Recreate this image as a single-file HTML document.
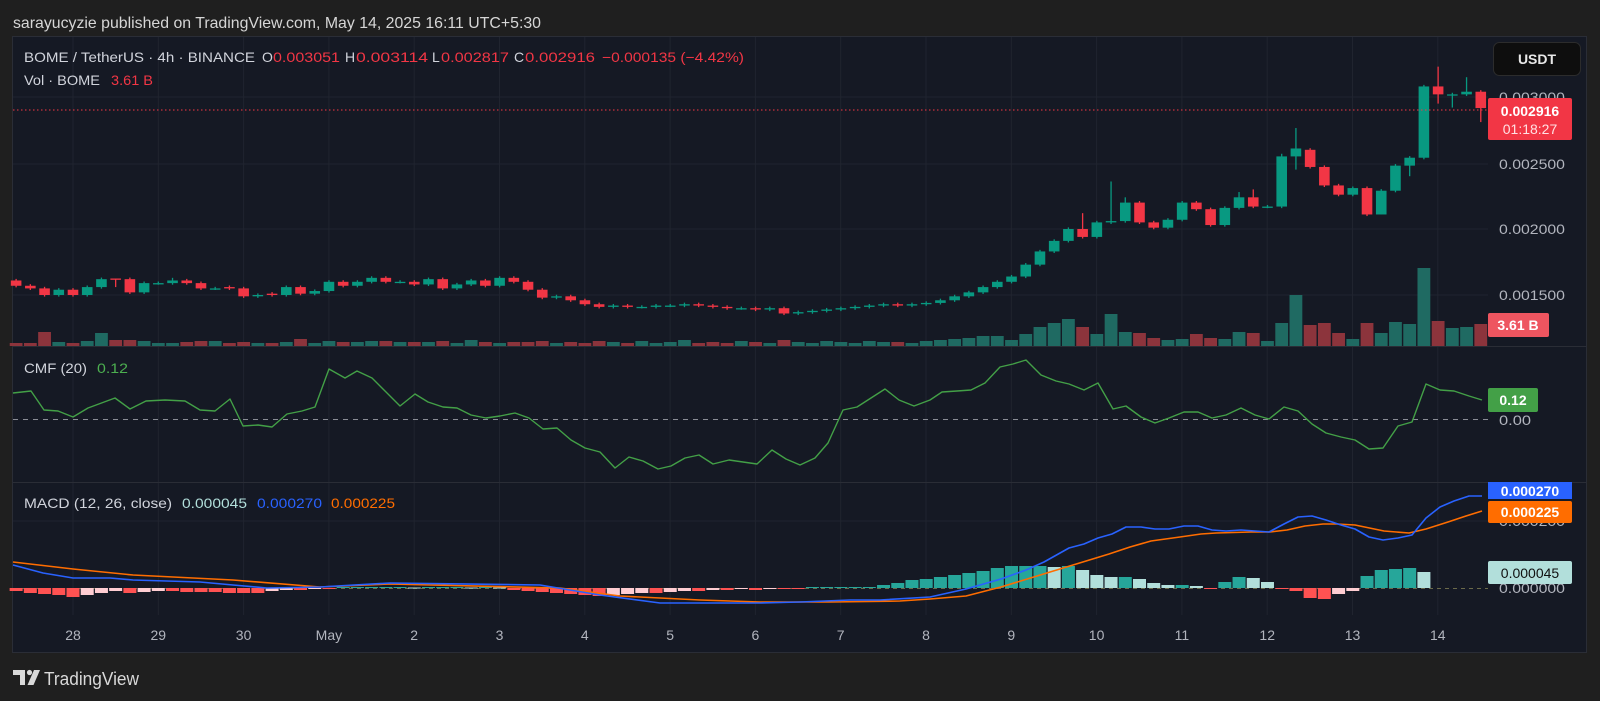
<!DOCTYPE html>
<html><head><meta charset="utf-8"><style>
html,body{margin:0;padding:0;background:#1f1f1f;width:1600px;height:701px;overflow:hidden}
svg{display:block}
text{font-family:"Liberation Sans",sans-serif}
</style></head><body>
<svg id="s" width="1600" height="701" viewBox="0 0 1600 701" xmlns="http://www.w3.org/2000/svg">
<rect x="0" y="0" width="1600" height="701" fill="#1f1f1f"/>
<rect x="12.5" y="36.5" width="1574" height="616" fill="#151924" stroke="#2a2d36"/>
<g id="grid"></g>
<g id="plot"></g>
<text x="13" y="28" font-size="16" fill="#d6d6d6" textLength="528" lengthAdjust="spacingAndGlyphs">sarayucyzie published on TradingView.com, May 14, 2025 16:11 UTC+5:30</text>
<g font-size="14">
<text x="24" y="62" fill="#d1d4dc" textLength="231" lengthAdjust="spacingAndGlyphs">BOME / TetherUS · 4h · BINANCE</text>
<text x="262" y="62" fill="#d1d4dc">O</text><text x="273" y="62" fill="#f23645" textLength="67" lengthAdjust="spacingAndGlyphs">0.003051</text>
<text x="345" y="62" fill="#d1d4dc">H</text><text x="356" y="62" fill="#f23645" textLength="72" lengthAdjust="spacingAndGlyphs">0.003114</text>
<text x="432" y="62" fill="#d1d4dc">L</text><text x="441" y="62" fill="#f23645" textLength="68" lengthAdjust="spacingAndGlyphs">0.002817</text>
<text x="514" y="62" fill="#d1d4dc">C</text><text x="525" y="62" fill="#f23645" textLength="70" lengthAdjust="spacingAndGlyphs">0.002916</text>
<text x="602" y="62" fill="#f23645" textLength="142" lengthAdjust="spacingAndGlyphs">−0.000135 (−4.42%)</text>
<text x="24" y="85" fill="#d1d4dc" textLength="76" lengthAdjust="spacingAndGlyphs">Vol · BOME</text>
<text x="111" y="85" fill="#f23645" textLength="42" lengthAdjust="spacingAndGlyphs">3.61 B</text>
<text x="24" y="373" fill="#d1d4dc" textLength="63" lengthAdjust="spacingAndGlyphs">CMF (20)</text>
<text x="97" y="373" fill="#4caf50" textLength="31" lengthAdjust="spacingAndGlyphs">0.12</text>
<text x="24" y="508" fill="#d1d4dc" textLength="148" lengthAdjust="spacingAndGlyphs">MACD (12, 26, close)</text>
<text x="182" y="508" fill="#b2dfdb" textLength="65" lengthAdjust="spacingAndGlyphs">0.000045</text>
<text x="257" y="508" fill="#2962ff" textLength="65" lengthAdjust="spacingAndGlyphs">0.000270</text>
<text x="331" y="508" fill="#ff6d00" textLength="64" lengthAdjust="spacingAndGlyphs">0.000225</text>
</g>
<g font-size="14" fill="#b2b5be">
<text x="1499" y="102" textLength="66" lengthAdjust="spacingAndGlyphs">0.003000</text>
<text x="1499" y="169" textLength="66" lengthAdjust="spacingAndGlyphs">0.002500</text>
<text x="1499" y="234" textLength="66" lengthAdjust="spacingAndGlyphs">0.002000</text>
<text x="1499" y="300" textLength="66" lengthAdjust="spacingAndGlyphs">0.001500</text>
<text x="1499" y="425" textLength="32" lengthAdjust="spacingAndGlyphs">0.00</text>
<text x="1499" y="526" textLength="66" lengthAdjust="spacingAndGlyphs">0.000200</text>
<text x="1499" y="593" textLength="66" lengthAdjust="spacingAndGlyphs">0.000000</text>
</g>
<g id="tl" font-size="14" fill="#b2b5be" text-anchor="middle"></g>
<rect x="1493.5" y="42.5" width="87" height="33" rx="6" fill="#0e0e0e" stroke="#2c2c2c"/>
<text x="1537" y="64" font-size="14" font-weight="bold" fill="#e8e8e8" text-anchor="middle">USDT</text>
<rect x="1488" y="98" width="84" height="42" rx="2" fill="#f23645"/>
<text x="1530" y="116" font-size="14" font-weight="bold" fill="#fff" text-anchor="middle">0.002916</text>
<text x="1530" y="134" font-size="14" fill="#ffe0e3" text-anchor="middle">01:18:27</text>
<rect x="1488" y="313" width="61" height="24" rx="2" fill="#ee5560"/>
<text x="1518" y="330" font-size="14" font-weight="bold" fill="#fff" text-anchor="middle">3.61 B</text>
<rect x="1488" y="388" width="50" height="24" rx="2" fill="#43a047"/>
<text x="1513" y="405" font-size="14" font-weight="bold" fill="#fff" text-anchor="middle">0.12</text>
<rect x="1488" y="482" width="84" height="17" fill="#2962ff"/>
<text x="1530" y="496" font-size="14" font-weight="bold" fill="#fff" text-anchor="middle">0.000270</text>
<rect x="1488" y="501" width="84" height="22" rx="2" fill="#ff6d00"/>
<text x="1530" y="517" font-size="14" font-weight="bold" fill="#fff" text-anchor="middle">0.000225</text>
<rect x="1488" y="561" width="84" height="23" rx="2" fill="#b2dfdb"/>
<text x="1530" y="578" font-size="14" fill="#111" text-anchor="middle">0.000045</text>
<g fill="#d9d9d9">
<path d="M13 670h12v15h-5v-10h-7z"/>
<circle cx="29.5" cy="672.5" r="2.6"/>
<path d="M34 670h6l-6.5 15h-6z"/>
<text x="44" y="685" font-size="18" textLength="95" lengthAdjust="spacingAndGlyphs">TradingView</text>
</g>
</svg>
<script>
(function(){
function X(k){return 73+k*14.22;}
function Y(p){return 97+(3-p)*132;}
var grid='';
var days=['28','29','30','May','2','3','4','5','6','7','8','9','10','11','12','13','14'];
var tl='';
for(var i=0;i<days.length;i++){var x=73+i*85.3;grid+='<line x1="'+x+'" y1="37" x2="'+x+'" y2="615" stroke="#20242f"/>';tl+='<text x="'+x+'" y="640">'+days[i]+'</text>';}
[97,164,229,295,521].forEach(function(y){grid+='<line x1="13" y1="'+y+'" x2="1488" y2="'+y+'" stroke="#20242f"/>';});
grid+='<line x1="13" y1="346.5" x2="1587" y2="346.5" stroke="#2a2d36"/>';
grid+='<line x1="13" y1="482.5" x2="1587" y2="482.5" stroke="#2a2d36"/>';
document.getElementById('grid').innerHTML=grid;
document.getElementById('tl').innerHTML=tl;
var C=[1.57,1.55,1.50,1.54,1.50,1.56,1.62,1.62,1.52,1.59,1.59,1.61,1.59,1.55,1.55,1.55,1.49,1.50,1.50,1.56,1.51,1.53,1.60,1.57,1.60,1.63,1.60,1.60,1.58,1.62,1.55,1.58,1.61,1.57,1.63,1.60,1.54,1.48,1.49,1.46,1.43,1.41,
1.42,1.41,1.41,1.42,1.42,1.43,1.42,1.41,1.40,1.40,1.39,1.40,1.36,1.37,1.38,1.39,1.40,1.41,1.42,1.43,1.42,1.43,1.44,1.46,1.49,1.52,1.56,1.60,
1.64,1.73,1.83,1.91,2.00,1.94,2.05,2.06,2.20,2.05,2.01,2.07,2.20,2.15,2.03,2.16,2.24,2.17,2.17,2.55,2.61,2.47,2.33,2.26,2.31,2.11,2.29,2.48,2.54,3.08,3.02,3.02,3.04,2.916];
var V=[3,3,14,4,3,5,13,6,6,5,3,3,4,5,5,3,4,3,3,4,7,3,5,4,4,5,5,4,4,4,5,3,6,4,3,4,4,5,3,4,3,5,
4,3,5,3,4,6,3,4,3,5,4,3,6,4,3,5,4,3,5,4,4,3,5,6,7,8,10,10,
6,12,19,23,27,19,12,32,14,13,8,6,7,12,8,7,14,13,5,23,51,21,23,13,7,23,13,24,22,78,25,18,19,22];
var hiO={73:2.36,86:2.765,96:3.23,98:3.15,83:2.30,3:1.62,7:1.63,85:2.57,71:2.12,74:2.24,82:2.28};
var loO={99:2.81,3:1.56,96:2.95,97:2.92,86:2.45,94:2.40,92:2.11};
var s='';
var prev=1.61;
for(var i=0;i<C.length;i++){
 var k=i-4,x=X(k),c=C[i],o=prev;if(k==3)o=1.625;if(k==11)o=1.56;if(k==14)o=1.51;if(k==87)o=2.60;
 var up=c>=o,col=up?'#089981':'#f23645';
 var hi=hiO[k]||Math.max(o,c)+0.012,lo=loO[k]||Math.min(o,c)-0.012;
 var vh=V[i]||3;
 s+='<rect x="'+(x-6.4)+'" y="'+(346-vh)+'" width="12.8" height="'+vh+'" fill="'+(up?'#1f6a62':'#8c343c')+'"/>';
 s+='<line x1="'+x+'" y1="'+Y(hi)+'" x2="'+x+'" y2="'+Y(lo)+'" stroke="'+col+'" stroke-width="1.3"/>';
 var t=Y(Math.max(o,c)),b=Y(Math.min(o,c));if(b-t<1.3){b=t+1.3;}
 s+='<rect x="'+(x-5.3)+'" y="'+t+'" width="10.6" height="'+(b-t)+'" fill="'+col+'"/>';
 prev=c;
}
s+='<line x1="13" y1="110" x2="1488" y2="110" stroke="#f23645" stroke-width="1" stroke-dasharray="1.5,2.5"/>';
s+='<line x1="13" y1="419.5" x2="1488" y2="419.5" stroke="#8a8d96" stroke-dasharray="5,5"/>';
s+='<line x1="13" y1="588.5" x2="1488" y2="588.5" stroke="#6b6a4a" stroke-dasharray="4,4"/>';
var H=[-3,-5,-6,-7,-9,-7,-5,-3,-5,-4,-3,-3,-4,-4,-4,-5,-5,-5,-3,-2,-2,-1,-1,1,1,1,1,1,0.5,1,1,1,0.5,1,0.5,-2,-3,-4,-5,-6,-7,-8,
-7,-6,-5,-5,-4,-3,-3,-2,-2,-1,-2,-1,-1,-1,1,1,1,1,1,3,5,8,9,11,
13,15,17,20,22,22,22,21,22,18,13,11,11,9,5,3,3,2,-1,6,11,10,6,-1,-3,-10,-11,-6,-3,12,18,19,20,16];
var pv=0;
for(var i=0;i<H.length;i++){var k=i-4,x=X(k),h=H[i],col;
 if(h>=0)col=(h>=pv)?'#26a69a':'#b2dfdb';else col=(h<=pv)?'#ff5252':'#ffcdd2';
 var y=h>=0?588-h:588, hh=Math.max(Math.abs(h),1);
 s+='<rect x="'+(x-6.5)+'" y="'+y+'" width="13" height="'+hh+'" fill="'+col+'"/>';pv=h;}
function pl(pts,col,w){return '<polyline fill="none" stroke="'+col+'" stroke-width="'+w+'" stroke-linejoin="round" points="'+pts+'"/>';}
var cmf='13,393 31,391 44,410 58,411 73,417 88,408 115,398 130,409 146,401 165,400 185,401 200,410 215,411 230,399 243,426 258,425 272,427 287,414 302,411 315,407 329,369 345,378 357,371 372,378 385,391 400,406 415,394 428,402 443,407 457,408 471,415 486,418 500,416 515,413 529,418 543,429 557,428 571,440 585,448 600,452 615,468 629,457 643,461 658,469 671,466 685,458 699,455 713,464 729,460 743,462 757,464 772,450 786,459 800,465 815,458 828,443 843,410 857,407 871,398 885,389 899,400 914,406 930,400 942,392 957,391 971,390 985,383 1000,367 1013,364 1026,360 1041,375 1056,381 1069,384 1084,390 1098,383 1113,409 1126,406 1141,417 1155,423 1169,418 1184,412 1198,412 1212,418 1226,415 1241,408 1255,415 1269,419 1284,407 1298,411 1312,424 1326,433 1341,437 1355,440 1369,449 1383,448 1398,426 1412,422 1426,384 1440,390 1454,391 1469,396 1482,400';
s+=pl(cmf,'#43a047',1.4);
var org='13,562 73,569 133,575 233,580 320,587 390,584 560,588 620,596 700,600 760,602 830,602 900,601 930,599 966,596 1001,587 1037,576 1073,565 1109,554 1130,547 1151,541 1180,537 1201,534 1216,533 1251,532 1269,532 1287,530 1305,526 1323,524 1337,524 1355,525 1384,531 1409,533 1426,529 1448,522 1466,516 1482,511';
var blu='13,565 43,573 73,578 110,578 133,580 200,582 233,585 267,588 320,587 390,583 540,585 600,595 660,603 760,603 800,602 850,600 880,600 930,597 966,589 1001,579 1026,570 1044,562 1069,548 1084,544 1098,538 1112,534 1126,527 1141,527 1155,529 1169,529 1184,526 1198,526 1212,530 1226,531 1241,530 1255,531 1269,532 1284,524 1298,517 1312,516 1326,520 1341,525 1355,529 1369,537 1383,540 1398,538 1412,535 1426,518 1440,507 1454,501 1469,496 1482,496';
s+=pl(org,'#ff6d00',1.6);
s+=pl(blu,'#2962ff',1.6);
document.getElementById('plot').innerHTML=s;
})();
</script>
</body></html>
